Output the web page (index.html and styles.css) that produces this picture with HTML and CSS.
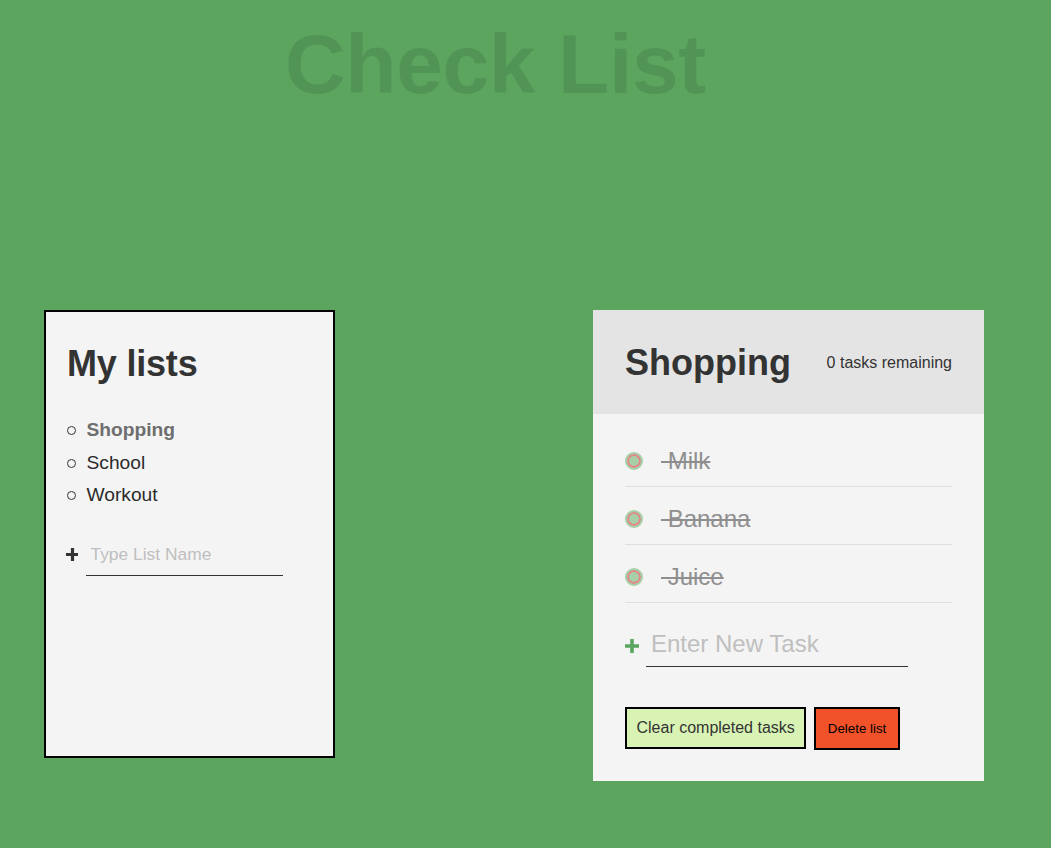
FILE: index.html
```html
<!DOCTYPE html>
<html lang="en">
<head>
<meta charset="utf-8">
<title>Check List</title>
<link rel="stylesheet" href="styles.css">
</head>
<body>
  <h1 class="title">Check List</h1>
  <main class="board">
    <section class="all-lists">
      <h2 class="all-lists-title">My lists</h2>
      <ul class="lists">
        <li class="list-name active">Shopping</li>
        <li class="list-name">School</li>
        <li class="list-name">Workout</li>
      </ul>
      <form class="new-list">
        <svg class="plus plus-dark" width="14" height="14" viewBox="0 0 14 14" aria-hidden="true">
          <path d="M2 7.5H15M8.5 1V14" stroke="#333" stroke-width="3.2" fill="none"/>
        </svg>
        <input class="new-input list-input" type="text" placeholder="Type List Name">
      </form>
    </section>

    <section class="todo-list">
      <header class="todo-header">
        <h2 class="list-title">Shopping</h2>
        <p class="task-count">0 tasks remaining</p>
      </header>
      <div class="todo-body">
        <div class="tasks">
          <div class="task">
            <label class="task-label"><span class="custom-checkbox"></span><span class="task-text">&nbsp;Milk</span></label>
          </div>
          <div class="task">
            <label class="task-label"><span class="custom-checkbox"></span><span class="task-text">&nbsp;Banana</span></label>
          </div>
          <div class="task">
            <label class="task-label"><span class="custom-checkbox"></span><span class="task-text">&nbsp;Juice</span></label>
          </div>
        </div>
        <form class="new-task">
          <svg class="plus plus-green" width="15" height="15" viewBox="0 0 15 15" aria-hidden="true">
            <path d="M0 8H14M7 1V15" stroke="#5ba55f" stroke-width="3.6" fill="none"/>
          </svg>
          <input class="new-input task-input" type="text" placeholder="Enter New Task">
        </form>
        <div class="delete-stuff">
          <button class="btn btn-clear" type="button">Clear completed tasks</button>
          <button class="btn btn-delete" type="button">Delete list</button>
        </div>
      </div>
    </section>
  </main>
</body>
</html>
```

FILE: styles.css
```css
* {
  box-sizing: border-box;
}

html, body {
  margin: 0;
  padding: 0;
}

body {
  background: #5ba55f;
  font-family: "Liberation Sans", Arial, Helvetica, sans-serif;
  color: #333;
  min-height: 848px;
}

.title {
  margin: 22px 0 0 285px;
  font-size: 84px;
  line-height: 84px;
  font-weight: 700;
  letter-spacing: -0.4px;
  color: rgba(0, 0, 0, 0.1);
  white-space: nowrap;
}

.board {
  display: flex;
  align-items: flex-start;
  gap: 258px;
  margin-top: 204px;
  padding-left: 44px;
}

/* left card */
.all-lists {
  width: 291px;
  min-height: 448px;
  border: 2px solid #000;
  background: #f4f4f4;
  padding: 30px 18px 20px 18px;
}

.all-lists-title {
  margin: 0 0 0 3px;
  font-size: 36px;
  line-height: 43.2px;
  font-weight: 700;
  color: #333;
  letter-spacing: -0.2px;
}

.lists {
  list-style: none;
  margin: 29px 0 0 0;
  padding: 0 0 0 3px;
  font-size: 19.2px;
  line-height: 32.6px;
}

.list-name {
  display: flex;
  align-items: center;
  color: #2b2b2b;
}

.list-name::before {
  content: "";
  width: 7px;
  height: 7px;
  border: 1px solid #333;
  border-radius: 50%;
  margin-right: 10.5px;
  flex: none;
}

.list-name.active {
  font-weight: 700;
  color: #6e6e6e;
}

.new-list {
  display: flex;
  align-items: flex-start;
  gap: 8px;
  margin-top: 32px;
}

.new-list .plus {
  margin-top: 3px;
}

.new-input {
  background: transparent;
  border: none;
  border-bottom: 1px solid #333;
  outline: none;
  font-family: inherit;
  color: #333;
  margin: 0;
}

.new-input::placeholder {
  color: #bfbfbf;
  opacity: 1;
}

.list-input {
  width: 197px;
  font-size: 17.4px;
  line-height: 20px;
  padding: 0 4px 11px 4.5px;
}

/* right card */
.todo-list {
  width: 391px;
  background: #f4f4f4;
}

.todo-header {
  display: flex;
  align-items: center;
  justify-content: space-between;
  background: #e4e4e4;
  padding: 31px 32px 29px 32px;
}

.list-title {
  margin: 0;
  font-size: 36px;
  line-height: 44px;
  font-weight: 700;
  color: #333;
}

.task-count {
  margin: 0;
  font-size: 16px;
  line-height: 18px;
  color: #333;
}

.todo-body {
  padding: 15px 32px 31px 32px;
}

.task {
  padding: 17px 0 11px 0;
  border-bottom: 1px solid #dedede;
}

.task-label {
  display: flex;
  align-items: center;
  font-size: 24px;
  line-height: 29px;
}

.custom-checkbox {
  width: 18px;
  height: 18px;
  border-radius: 50%;
  background: #a8cfa8;
  border: 2px solid #a8cfa8;
  box-shadow: inset 0 0 0 2px #e3878a;
  margin-right: 18px;
  flex: none;
}

.task-text {
  color: #8f8f8f;
  text-decoration: line-through;
  text-decoration-thickness: 2px;
}

.new-task {
  display: flex;
  align-items: center;
  gap: 6px;
  margin-top: 27px;
}

.new-task .plus {
  margin-bottom: 5px;
}

.task-input {
  width: 262px;
  font-size: 24px;
  line-height: 27.6px;
  padding: 0 5px 8px 5px;
}

.delete-stuff {
  display: flex;
  align-items: flex-start;
  gap: 8px;
  margin-top: 40px;
}

.btn {
  border: 2px solid #000;
  font-family: inherit;
  cursor: pointer;
  margin: 0;
  border-radius: 0;
}

.btn-clear {
  background: #d9f3b5;
  color: #333;
  font-size: 16px;
  line-height: 18px;
  padding: 10px 9.5px;
}

.btn-delete {
  background: #f15229;
  color: #000;
  font-size: 13.33px;
  line-height: 15px;
  padding: 12px 11.5px 12px 11.5px;
}
```
